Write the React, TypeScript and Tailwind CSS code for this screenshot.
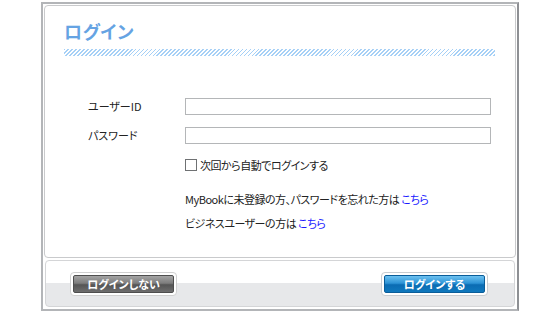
import React, { useState } from 'react';

const jp = "font-['Noto_Sans_CJK_JP','Noto_Sans',sans-serif] [font-feature-settings:'palt']";

export default function App() {
    const [userId, setUserId] = useState('');
    const [password, setPassword] = useState('');
    const [remember, setRemember] = useState(false);

    return (
        <div className={`w-[560px] h-[314px] bg-white pt-[2px] pl-[41px] ${jp}`}>
            {/* Outer dialog frame */}
            <div className="w-[478px] h-[309px] border-2 border-[#b3b5b8] border-r-[#8e9094] bg-white p-[1px] flex flex-col gap-[2px]">
                {/* Main card */}
                <div className="h-[253px] border border-[#c9cacc] rounded-[4px] bg-white pl-[19px] pt-[13px]">
                    <h1 className="text-[18px] leading-[24px] font-bold text-[#65a3e3] tracking-[0.5px]">ログイン</h1>
                    <div className="mt-[6px] w-[431px] h-[7px] bg-[repeating-linear-gradient(135deg,#a6d0f6_0px,#a6d0f6_1.2px,#ffffff_1.2px,#ffffff_2.8px)]" />

                    <div className="mt-[42px] pl-[24px] flex flex-col text-[11px] text-[#222]">
                        <div className="flex items-center h-[17px]">
                            <label className="w-[97px]">ユーザーID</label>
                            <input
                                value={userId}
                                onChange={(e) => setUserId(e.target.value)}
                                className="w-[306px] h-[17px] border border-[#b4b6b8] bg-white outline-none px-1 text-[11px]"
                            />
                        </div>
                        <div className="flex items-center h-[17px] mt-[12px]">
                            <label className="w-[97px]">パスワード</label>
                            <input
                                type="password"
                                value={password}
                                onChange={(e) => setPassword(e.target.value)}
                                className="w-[306px] h-[17px] border border-[#b4b6b8] bg-white outline-none px-1 text-[11px]"
                            />
                        </div>
                        <label className="flex items-center ml-[97px] mt-[14px] h-[14px] cursor-pointer">
                            <span
                                onClick={() => setRemember(!remember)}
                                className="w-[12px] h-[12px] border border-[#6f7173] bg-white mr-[3px] flex items-center justify-center text-[10px] leading-none"
                            >
                                {remember ? '✓' : ''}
                            </span>
                            <span className="tracking-[-0.5px]">次回から自動でログインする</span>
                        </label>

                        <p className="ml-[97px] mt-[20px] leading-[14px] tracking-[-0.5px]">
                            MyBookに未登録の方、パスワードを忘れた方は <a href="#" className="text-[#1a1aff]">こちら</a>
                        </p>
                        <p className="ml-[97px] mt-[10px] leading-[14px] tracking-[-0.5px]">
                            ビジネスユーザーの方は <a href="#" className="text-[#1a1aff]">こちら</a>
                        </p>
                    </div>
                </div>

                {/* Footer */}
                <div className="flex-1 mx-[1px] mb-[1px] border border-[#d4d5d7] rounded-[4px] bg-[linear-gradient(to_bottom,#ffffff_0%,#ffffff_48%,#e7e8ea_50%,#e7e8ea_100%)] flex items-center justify-between pl-[24px] pr-[26px] pt-[1px]">
                    <button className="w-[107px] h-[24px] rounded-[4px] border border-[#d0d0d0] p-[2px] bg-white">
                        <span className="flex items-center justify-center w-full h-full rounded-[2px] border border-[#4e4e4e] bg-[linear-gradient(to_bottom,#a4a4a4_0%,#7d7d7d_45%,#555555_55%,#6e6e6e_100%)] text-white text-[11px] font-bold">
                            ログインしない
                        </span>
                    </button>
                    <button className="w-[107px] h-[24px] rounded-[4px] border border-[#c8ccd0] p-[2px] bg-white">
                        <span className="flex items-center justify-center w-full h-full rounded-[2px] border border-[#0a5d99] bg-[linear-gradient(to_bottom,#6cc1f0_0%,#2d93d6_45%,#0b6cb3_55%,#0f78bd_100%)] text-white text-[11px] font-bold">
                            ログインする
                        </span>
                    </button>
                </div>
            </div>
        </div>
    );
}
